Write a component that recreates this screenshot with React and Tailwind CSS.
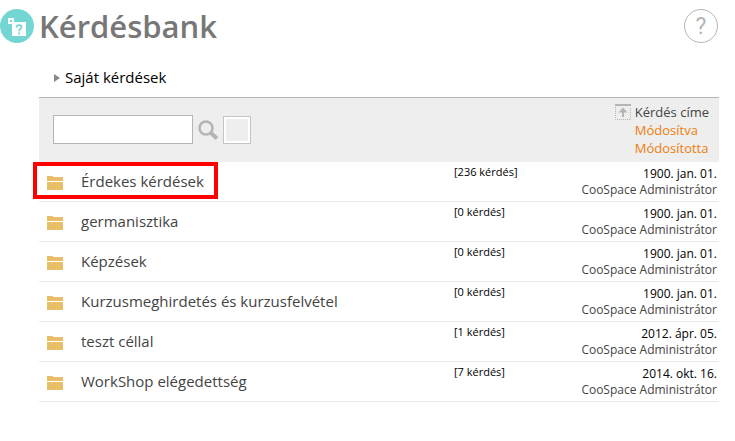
import React from "react";

const questionSets = [
  { name: "Érdekes kérdések", count: 236, date: "1900. jan. 01.", marked: true },
  { name: "germanisztika", count: 0, date: "1900. jan. 01." },
  { name: "Képzések", count: 0, date: "1900. jan. 01." },
  { name: "Kurzusmeghirdetés és kurzusfelvétel", count: 0, date: "1900. jan. 01." },
  { name: "teszt céllal", count: 1, date: "2012. ápr. 05." },
  { name: "WorkShop elégedettség", count: 7, date: "2014. okt. 16." },
];

const BankIcon = () => (
  <svg className="w-[34px] h-[34px] shrink-0" viewBox="0 0 34 34" aria-hidden="true">
    <circle cx="17" cy="17" r="17" fill="#74d6d2" />
    <path d="M8 9h6v4h12v14H12V15H8z M10 11v2h2v-2z" fill="#fff" fillRule="evenodd" />
    <path
      d="M16.500 18.500v-.5q0-1.800 2.500-1.800t2.500 1.900q0 1-1.200 1.900T19 22.300M19 23.500v2"
      fill="none"
      stroke="#74d6d2"
      strokeWidth="1.700"
    />
  </svg>
);

const FolderIcon = () => (
  <svg className="w-4 h-[14px]" viewBox="0 0 16 14" shapeRendering="crispEdges" aria-hidden="true">
    <path d="M0 0h6v1h10v4H0z M0 6h16v8H0z" fill="#e8bf66" />
  </svg>
);

const SearchIcon = () => (
  <svg className="w-5 h-5" viewBox="0 0 20 20" fill="none" stroke="#b5b5b5" aria-hidden="true">
    <circle cx="8" cy="8" r="6.500" strokeWidth="2.600" />
    <path d="M13 13l6 5.500" strokeWidth="4" />
  </svg>
);

const SortIcon = () => (
  <svg className="w-4 h-4" viewBox="0 0 16 16" fill="none" stroke="#b5b5b5" aria-hidden="true">
    <path d="M0 1h16" strokeWidth="2" />
    <path d="M.5 3v12.500h15V3" strokeDasharray="1 1" />
    <path d="M8 13V7" strokeWidth="2" />
    <path d="M8 3.500l4.500 5h-9z" fill="#b5b5b5" stroke="none" />
  </svg>
);

const App = () => {
  const [search, setSearch] = React.useState("");

  return (
    <div className="bg-white pt-[9px] pr-4 pb-10 font-['Open_Sans','Noto_Sans',sans-serif] text-[#444]">
      <header className="flex items-center justify-between h-[34px] pr-px">
        <div className="flex items-center gap-[5px]">
          <BankIcon />
          <h1 className="text-[31px] leading-[34px] font-semibold text-[#777]">Kérdésbank</h1>
        </div>
        <button
          aria-label="Súgó"
          className="w-[34px] h-[34px] pt-[2px] rounded-full border border-[#b5b5b5] text-[23px] leading-[30px] text-[#b5b5b5] font-[Roboto,sans-serif] cursor-pointer"
        >
          ?
        </button>
      </header>

      <main className="pl-[39px]">
        <button className="mt-[23px] mb-[9px] ml-[15px] flex items-center gap-[5px] text-[15px] leading-[22px] text-black cursor-pointer">
          <svg className="w-[6px] h-[10px] pt-[2px]" viewBox="0 0 6 8" aria-hidden="true">
            <path d="M0 0l6 4-6 4z" fill="#888" />
          </svg>
          Saját kérdések
        </button>

        <div className="flex items-center justify-between h-[65px] pl-[14px] pr-[10px] border-t border-[#b5b5b5] bg-[#eee]">
          <form className="flex items-center pb-px" onSubmit={(e) => e.preventDefault()}>
            <input
              type="text"
              aria-label="Keresés"
              value={search}
              onChange={(e) => setSearch(e.target.value)}
              className="w-[140px] h-[29px] px-2 text-sm bg-white border border-[#b5b5b5] outline-none"
            />
            <button aria-label="Keresés indítása" className="ml-[5px] cursor-pointer">
              <SearchIcon />
            </button>
            <button
              type="button"
              aria-label="Szűrő"
              className="ml-[5px] w-7 h-7 border border-[#c4c4c4] bg-white p-[2px] cursor-pointer"
            >
              <span className="block w-full h-full bg-[#eee]"></span>
            </button>
          </form>
          <div className="flex items-start gap-1">
            <span className="pt-px">
              <SortIcon />
            </span>
            <div className="flex flex-col items-start text-[13px] leading-[18px] text-[#f07d0a]">
              <button className="text-[#444] cursor-pointer">Kérdés címe</button>
              <button className="cursor-pointer">Módosítva</button>
              <button className="cursor-pointer">Módosította</button>
            </div>
          </div>
        </div>

        <ul>
          {questionSets.map((item) => (
            <li key={item.name} className="relative flex h-10 pl-2 pr-[2px] border-b border-[#eaeaea]">
              <a href="#" className="flex flex-1 items-center gap-[18px] pb-[2px] text-[15px] leading-5">
                <span className="pt-1">
                  <FolderIcon />
                </span>
                {item.name}
              </a>
              <span className="w-[109px] pt-[2px] text-[11px] leading-4 text-black">
                [{item.count} kérdés]
              </span>
              <div className="w-[154px] pt-1 text-right text-xs leading-4">
                <p className="text-black">{item.date}</p>
                <p>CooSpace Administrátor</p>
              </div>
              {item.marked && (
                <span className="absolute -left-[6px] top-0 w-[185px] h-[37px] border-4 border-[#ff0000] pointer-events-none"></span>
              )}
            </li>
          ))}
        </ul>
      </main>
    </div>
  );
};

export default App;
